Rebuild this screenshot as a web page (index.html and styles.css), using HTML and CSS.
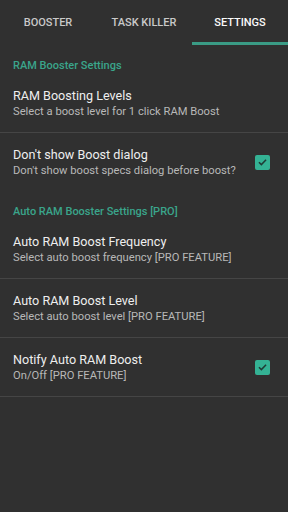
FILE: index.html
```html
<!DOCTYPE html>
<html lang="en">
<head>
    <meta charset="UTF-8">
    <meta name="viewport" content="width=device-width, initial-scale=1.0">
    <title>Settings</title>
    <link rel="stylesheet" href="styles.css">
</head>
<body>
    <nav class="tabs">
        <div class="tab">BOOSTER</div>
        <div class="tab">TASK KILLER</div>
        <div class="tab tab--active">SETTINGS</div>
    </nav>
    <main>
        <h3 class="category">RAM Booster Settings</h3>
        <div class="pref pref--line">
            <div class="pref-text">
                <p class="pref-title">RAM Boosting Levels</p>
                <p class="pref-sub">Select a boost level for 1 click RAM Boost</p>
            </div>
        </div>
        <div class="pref">
            <div class="pref-text">
                <p class="pref-title">Don't show Boost dialog</p>
                <p class="pref-sub">Don't show boost specs dialog before boost?</p>
            </div>
            <span class="check">
                <svg viewBox="0 0 16 16" width="16" height="16"><path d="M4.2 8.2l2.6 2.6 5-5.2" fill="none" stroke="#1f3b35" stroke-width="1.6"/></svg>
            </span>
        </div>
        <h3 class="category">Auto RAM Booster Settings [PRO]</h3>
        <div class="pref pref--line">
            <div class="pref-text">
                <p class="pref-title">Auto RAM Boost Frequency</p>
                <p class="pref-sub">Select auto boost frequency [PRO FEATURE]</p>
            </div>
        </div>
        <div class="pref pref--line">
            <div class="pref-text">
                <p class="pref-title">Auto RAM Boost Level</p>
                <p class="pref-sub">Select auto boost level [PRO FEATURE]</p>
            </div>
        </div>
        <div class="pref pref--line">
            <div class="pref-text">
                <p class="pref-title">Notify Auto RAM Boost</p>
                <p class="pref-sub">On/Off [PRO FEATURE]</p>
            </div>
            <span class="check">
                <svg viewBox="0 0 16 16" width="16" height="16"><path d="M4.2 8.2l2.6 2.6 5-5.2" fill="none" stroke="#1f3b35" stroke-width="1.6"/></svg>
            </span>
        </div>
    </main>
</body>
</html>
```

FILE: styles.css
```css
body{
    margin:0;
    background-color: #303030;
    font-family: Roboto, "Noto Sans", sans-serif;
    height: 512px;
    overflow: hidden;
}
.tabs{
    display: grid;
    grid-template-columns: 1fr 1fr 1fr;
    height: 45px;
}
.tab{
    font-size: 11px;
    font-weight: 500;
    color: #c9c9c9;
    text-align: center;
    padding-top: 1px;
    line-height: 44px;
}
.tab--active{
    color: #fafafa;
    box-shadow: inset 0 -3px 0 #3a9b85;
}
.category{
    margin: 0;
    height: 29px;
    box-sizing: border-box;
    padding-left: 13px;
    padding-top: 13.5px;
    font-size: 11px;
    line-height: 14px;
    font-weight: 500;
    color: #3aa58b;
}
.pref{
    display: flex;
    align-items: center;
    height: 58px;
    padding-left: 13px;
    padding-right: 18px;
}
.pref--line{
    border-bottom: 1px solid #454545;
}
.pref-text{
    flex: 1;
    align-self: flex-start;
    padding-top: 13px;
}
.pref-title{
    margin: 0;
    font-size: 12.6px;
    line-height: 18px;
    color: #eeeeee;
}
.pref-sub{
    margin: 0;
    font-size: 11.2px;
    line-height: 14px;
    color: #b8b8b8;
}
.check{
    width: 15px;
    height: 15px;
    border-radius: 2px;
    background-color: #34b294;
    display: flex;
    align-items: center;
    justify-content: center;
}
```
